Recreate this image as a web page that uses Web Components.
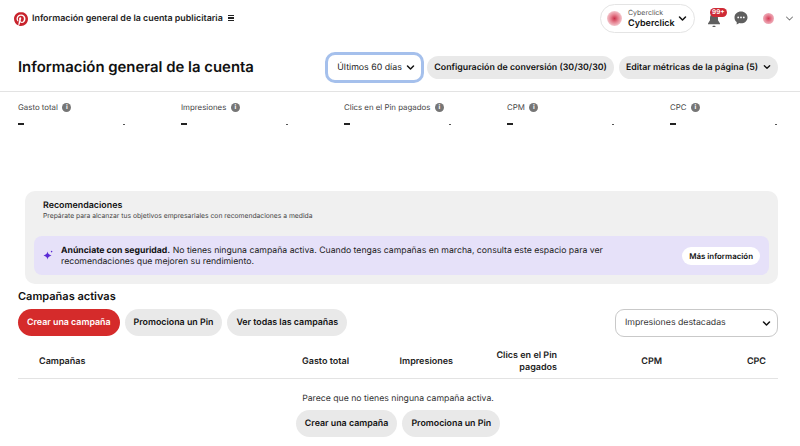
<!DOCTYPE html>
<html lang="es">
<head>
<meta charset="utf-8">
<title>Información general de la cuenta</title>
<style>
  html,body{margin:0;padding:0;background:#fff;}
  body{font-family:Inter,"Liberation Sans",sans-serif;color:#111;width:800px;height:446px;overflow:hidden;text-rendering:geometricPrecision;}
</style>
</head>
<body>
<ads-header></ads-header>
<title-row></title-row>
<metric-row>
  <metric-item name="Gasto total"></metric-item>
  <metric-item name="Impresiones"></metric-item>
  <metric-item name="Clics en el Pin pagados"></metric-item>
  <metric-item name="CPM"></metric-item>
  <metric-item name="CPC"></metric-item>
</metric-row>
<rec-card></rec-card>
<campaign-section></campaign-section>

<script>
const chevron = (size, color = '#111', width = 2) =>
  `<svg width="${size}" height="${size}" viewBox="0 0 12 12" fill="none"><path d="M2 4l4 4 4-4" stroke="${color}" stroke-width="${width}" stroke-linecap="round" stroke-linejoin="round"/></svg>`;

class PillButton extends HTMLElement{
  constructor(){
    super();
    this.attachShadow({mode:'open'});
    this.shadowRoot.innerHTML = `
    <style>
      :host{display:inline-flex;align-items:center;justify-content:center;box-sizing:border-box;height:var(--h,27px);width:var(--w,auto);padding:0 var(--px,9px);gap:5px;
        border-radius:14px;background:#e9e9e9;color:#111;font-size:var(--fs,8.85px);font-weight:600;white-space:nowrap;flex:none;}
      :host([red]){background:#d52b2b;color:#fff;}
      :host([white]){background:#fff;}
      ::slotted(svg){display:block;flex:none;}
    </style>
    <slot></slot>`;
  }
}
customElements.define('pill-button', PillButton);

class AdsHeader extends HTMLElement{
  constructor(){
    super();
    this.attachShadow({mode:'open'});
    this.shadowRoot.innerHTML = `
    <style>
      :host{display:flex;align-items:center;height:36px;box-sizing:border-box;padding:0 6px 0 14px;}
      .logo{width:14px;height:14px;display:block;margin-right:4px;margin-top:1px;}
      .name{font-size:8.900px;font-weight:600;color:#222;}
      .menu{margin-left:5px;display:flex;flex-direction:column;gap:1.400px;width:6.500px;}
      .menu i{display:block;height:1.200px;background:#222;}
      .account{margin-left:auto;width:95px;height:29px;box-sizing:border-box;border:1px solid #e4e4e4;border-radius:15px;
        display:flex;align-items:center;padding:0 7px 0 6px;margin-right:12px;margin-top:1px;}
      .dot{width:15px;height:15px;border-radius:50%;flex:none;background:radial-gradient(circle,#c9314a 0,#e57f8e 35%,#f3c4cb 70%,#f6dfe2 100%);}
      .who{margin-left:6px;flex:1;line-height:1;}
      .who small{display:block;font-size:7px;color:#555;margin-bottom:2.500px;}
      .who b{display:block;font-size:9px;font-weight:600;color:#111;}
      .bell{position:relative;width:14px;height:16px;margin-right:13px;margin-top:4px;}
      .badge{position:absolute;left:3px;top:-4px;background:#cf2a35;color:#fff;font-size:6.500px;font-weight:600;line-height:9px;padding:0 2px;border-radius:5px;height:9px;}
      .chat{margin-right:15px;display:block;}
      .avatar{width:11px;height:11px;border-radius:50%;background:radial-gradient(circle,#d53a55 0,#e8899a 45%,#f5d3d9 100%);margin-right:11px;}
    </style>
    <svg class="logo" viewBox="0 0 24 24"><circle cx="12" cy="12" r="11" fill="#fff"/><path fill="#c8232c" d="M12.017 0C5.396 0 .029 5.367.029 11.987c0 5.079 3.158 9.417 7.618 11.162-.105-.949-.199-2.403.041-3.439.219-.937 1.406-5.957 1.406-5.957s-.359-.72-.359-1.781c0-1.663.967-2.911 2.168-2.911 1.024 0 1.518.769 1.518 1.688 0 1.029-.653 2.567-.992 3.992-.285 1.193.6 2.165 1.775 2.165 2.128 0 3.768-2.245 3.768-5.487 0-2.861-2.063-4.869-5.008-4.869-3.41 0-5.409 2.562-5.409 5.199 0 1.033.394 2.143.889 2.741.099.12.112.225.085.345-.09.375-.293 1.199-.334 1.363-.053.225-.172.271-.401.165-1.495-.69-2.433-2.878-2.433-4.646 0-3.776 2.748-7.252 7.92-7.252 4.158 0 7.392 2.967 7.392 6.923 0 4.135-2.607 7.462-6.233 7.462-1.214 0-2.354-.629-2.758-1.379l-.749 2.848c-.269 1.045-1.004 2.352-1.498 3.146 1.123.345 2.306.535 3.55.535 6.607 0 11.985-5.365 11.985-11.987C23.97 5.39 18.592.026 11.985.026L12.017 0z"/></svg>
    <span class="name">Información general de la cuenta publicitaria</span>
    <span class="menu"><i></i><i></i><i></i></span>
    <div class="account">
      <span class="dot"></span>
      <span class="who"><small>Cyberclick</small><b>Cyberclick</b></span>
      ${chevron(9)}
    </div>
    <div class="bell">
      <svg width="14" height="16" viewBox="0 0 14 16"><path fill="#5f5f5f" d="M7 1.500c-2.600 0-4 2-4 4.400v2.400L1 11.400v.9h12v-.9l-2-3.100V5.900c0-2.400-1.400-4.400-4-4.400z"/><rect x="5.500" y="13.800" width="3" height="1.200" rx=".6" fill="#5f5f5f"/></svg>
      <span class="badge">99+</span>
    </div>
    <svg class="chat" width="14" height="14" viewBox="0 0 14 14"><path fill="#5f5f5f" d="M7 .5c3.600 0 6.500 2.600 6.500 5.900 0 3.300-2.900 5.900-6.500 5.900-.6 0-1.100-.1-1.600-.2L2.700 13.600v-2.500C1.300 10 .5 8.300.5 6.400.5 3.100 3.400.5 7 .5z"/><circle cx="4.200" cy="6.400" r=".9" fill="#fff"/><circle cx="7" cy="6.400" r=".9" fill="#fff"/><circle cx="9.800" cy="6.400" r=".9" fill="#fff"/></svg>
    <span class="avatar"></span>
    ${chevron(9, '#777', 1.4)}`;
  }
}
customElements.define('ads-header', AdsHeader);

class TitleRow extends HTMLElement{
  constructor(){
    super();
    this.attachShadow({mode:'open'});
    this.shadowRoot.innerHTML = `
    <style>
      :host{display:flex;align-items:center;height:56px;box-sizing:border-box;padding:13px 22px 6px 18px;border-bottom:1px solid #e3e3e3;}
      h1{margin:0;font-size:14.900px;font-weight:600;color:#111;flex:1;white-space:nowrap;}
      .range{box-sizing:border-box;width:99px;height:31px;border:3px solid #a5c0ec;border-radius:10px;display:flex;align-items:center;justify-content:space-between;
        padding:0 6px 0 9px;font-size:8.800px;color:#222;margin-right:3px;flex:none;white-space:nowrap;}
      pill-button + pill-button{margin-left:5px;}
      pill-button{--h:23px;--px:7px;--fs:8.800px;}
    </style>
    <h1>Información general de la cuenta</h1>
    <div class="range"><span>Últimos 60 días</span>${chevron(9)}</div>
    <pill-button>Configuración de conversión (30/30/30)</pill-button>
    <pill-button>Editar métricas de la página (5) ${chevron(8)}</pill-button>`;
  }
}
customElements.define('title-row', TitleRow);

class MetricRow extends HTMLElement{
  constructor(){
    super();
    this.attachShadow({mode:'open'});
    this.shadowRoot.innerHTML = `
    <style>
      :host{display:grid;grid-template-columns:repeat(5,163px);padding:9px 0 0 18px;height:90px;box-sizing:content-box;}
    </style>
    <slot></slot>`;
  }
}
customElements.define('metric-row', MetricRow);

class MetricItem extends HTMLElement{
  constructor(){
    super();
    this.attachShadow({mode:'open'});
    this.shadowRoot.innerHTML = `
    <style>
      :host{display:block;}
      .label{display:flex;align-items:center;gap:4.500px;font-size:7.850px;color:#444;height:12px;}
      .i{width:9px;height:9px;border-radius:50%;background:#767676;color:#fff;font-size:6.500px;font-weight:700;line-height:9px;text-align:center;font-style:normal;}
      .vals{display:flex;justify-content:space-between;align-items:center;width:107px;margin-top:8px;height:6px;}
      .big{width:6px;height:2px;background:#222;}
      .small{width:2px;height:1px;background:#555;}
    </style>
    <div class="label"><span id="n"></span><em class="i">i</em></div>
    <div class="vals"><span class="big"></span><span class="small"></span></div>`;
    this.shadowRoot.getElementById('n').textContent = this.getAttribute('name');
  }
}
customElements.define('metric-item', MetricItem);

class RecCard extends HTMLElement{
  constructor(){
    super();
    this.attachShadow({mode:'open'});
    this.shadowRoot.innerHTML = `
    <style>
      :host{display:block;box-sizing:border-box;width:753px;height:93px;margin-left:25px;background:#f0f0f0;border-radius:10px;padding:9px;}
      .head{padding:1px 0 0 9px;height:35px;}
      h2{margin:0;font-size:8.900px;font-weight:600;line-height:10px;color:#111;}
      p{margin:0;font-size:6.750px;line-height:9px;color:#444;}
      .note{display:flex;align-items:center;height:39px;background:#e6e1f9;border-radius:8px;padding:0 9px;}
      .note svg{flex:none;margin-right:8px;display:block;}
      .text{flex:1;font-size:8.700px;line-height:11px;color:#222;padding-top:2px;}
      .text b{font-weight:700;color:#111;}
      pill-button{--h:18px;--px:7px;--fs:7.900px;}
    </style>
    <div class="head"><h2>Recomendaciones</h2><p>Prepárate para alcanzar tus objetivos empresariales con recomendaciones a medida</p></div>
    <div class="note">
      <svg width="10" height="11" viewBox="0 0 10 11"><path fill="#5b2bd6" d="M4.500 1.500C5 3.800 5.800 4.600 8.500 5.500 5.800 6.400 5 7.200 4.500 9.500 4 7.200 3.200 6.400.5 5.500 3.200 4.600 4 3.800 4.500 1.500z"/><circle cx="8.600" cy="1.600" r=".8" fill="#5b2bd6"/></svg>
      <div class="text"><b>Anúnciate con seguridad.</b> No tienes ninguna campaña activa. Cuando tengas campañas en marcha, consulta este espacio para ver<br>recomendaciones que mejoren su rendimiento.</div>
      <pill-button white>Más información</pill-button>
    </div>`;
  }
}
customElements.define('rec-card', RecCard);

class CampaignSection extends HTMLElement{
  constructor(){
    super();
    this.attachShadow({mode:'open'});
    this.shadowRoot.innerHTML = `
    <style>
      :host{display:block;box-sizing:border-box;width:760px;margin-left:18px;padding-top:5px;}
      h2{margin:0 0 5px;font-size:11px;line-height:15px;font-weight:600;color:#111;}
      .bar{display:flex;gap:5px;align-items:flex-start;}
      .select{margin-left:auto;box-sizing:border-box;width:163px;height:28px;border:1px solid #c9c9c9;border-radius:9px;display:flex;align-items:center;justify-content:space-between;
        padding:0 6px 0 9px;font-size:8.750px;color:#333;}
      .cols{display:grid;grid-template-columns:206px 104px 104px 104px 105px 104px;justify-content:start;align-items:center;
        height:42px;box-sizing:border-box;padding:8px 12px 0 21px;border-bottom:1px solid #e3e3e3;font-size:9px;font-weight:600;color:#222;line-height:12px;text-align:right;}
      .cols span:first-child{text-align:left;}
      .empty{display:flex;flex-direction:column;align-items:center;padding-top:14px;}
      .empty p{margin:0 0 5px;font-size:8.700px;line-height:12px;color:#333;}
      .acts{display:flex;gap:5px;}
    </style>
    <h2>Campañas activas</h2>
    <div class="bar">
      <pill-button red>Crear una campaña</pill-button>
      <pill-button>Promociona un Pin</pill-button>
      <pill-button>Ver todas las campañas</pill-button>
      <div class="select"><span>Impresiones destacadas</span>${chevron(9)}</div>
    </div>
    <div class="cols">
      <span>Campañas</span><span>Gasto total</span><span>Impresiones</span><span>Clics en el Pin<br>pagados</span><span>CPM</span><span>CPC</span>
    </div>
    <div class="empty">
      <p>Parece que no tienes ninguna campaña activa.</p>
      <div class="acts"><pill-button>Crear una campaña</pill-button><pill-button>Promociona un Pin</pill-button></div>
    </div>`;
  }
}
customElements.define('campaign-section', CampaignSection);
</script>
</body>
</html>
